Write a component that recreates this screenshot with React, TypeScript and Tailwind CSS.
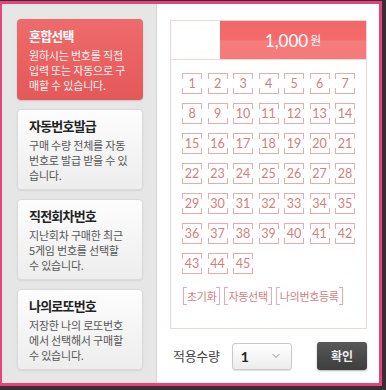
import React from 'react';
import { ChevronDown } from 'lucide-react';

const KR = { fontFamily: '"Noto Sans CJK KR", "Noto Sans", sans-serif' };
const NUM = { fontFamily: 'Lato, "Noto Sans CJK KR", sans-serif' };

const menus = [
  { title: '혼합선택', lines: ['원하시는 번호를 직접', '입력 또는 자동으로 구', '매할 수 있습니다.'], active: true },
  { title: '자동번호발급', lines: ['구매 수량 전체를 자동', '번호로 발급 받을 수 있', '습니다.'] },
  { title: '직전회차번호', lines: ['지난회차 구매한 최근', '5게임 번호를 선택할', '수 있습니다.'] },
  { title: '나의로또번호', lines: ['저장한 나의 로또번호', '에서 선택해서 구매할', '수 있습니다.'] },
];

const MenuCard = ({ title, lines, active }: { title: string; lines: string[]; active?: boolean }) => (
  <div
    className={
      active
        ? 'h-[81px] rounded-[4px] bg-gradient-to-b from-[#ef6b6b] to-[#e45858] px-[12px] pt-[9px] shadow-[0_1px_2px_rgba(0,0,0,0.15)]'
        : 'h-[81px] rounded-[4px] border border-[#dadada] bg-gradient-to-b from-[#fdfdfd] to-[#ededed] px-[11px] pt-[8px] shadow-[0_1px_2px_rgba(0,0,0,0.08)]'
    }
  >
    <div className={`text-[13px] leading-[16px] font-bold tracking-[-0.8px] ${active ? 'text-white' : 'text-[#222]'}`}>
      {title}
    </div>
    <div className={`mt-[4px] text-[11px] leading-[15px] tracking-[-0.2px] ${active ? 'text-[#fff2f2]' : 'text-[#555]'}`}>
      {lines.map((l) => (
        <div key={l} className="whitespace-nowrap">{l}</div>
      ))}
    </div>
  </div>
);

// number cell with bracket-style corners
const NumCell = ({ n }: { n: number }) => (
  <div className="relative h-[21px] w-[20px] flex items-center justify-center pt-[2px] text-[12.5px] text-[#d27e7e]" style={NUM}>
    <span className="absolute inset-x-0 top-0 h-[6px] border-x border-t border-[#e6acac]" />
    <span className="absolute inset-x-0 bottom-0 h-[6px] border-x border-b border-[#e6acac]" />
    {n}
  </div>
);

const BracketBtn = ({ label }: { label: string }) => (
  <div className="relative h-[18px] flex items-center px-[4px] text-[11px] text-[#d27e7e] tracking-[-0.3px]">
    <span className="absolute inset-y-0 left-0 w-[4px] border-y border-l border-[#e6acac]" />
    <span className="absolute inset-y-0 right-0 w-[4px] border-y border-r border-[#e6acac]" />
    {label}
  </div>
);

export default function App() {
  const nums = Array.from({ length: 45 }, (_, i) => i + 1);
  return (
    <div className="w-[386px] h-[390px] bg-[#3a2c33] pt-px pr-[4px] pb-[4px]" style={KR}>
      <div className="h-full flex border-[3px] border-l-2 border-[#e4437b] bg-white">
        {/* left menu */}
        <div className="w-[155px] shrink-0 bg-[#e6e6e6] border-r border-[#d4d4d4] pl-[15px] pt-[15px] flex flex-col gap-[9px]">
          {menus.map((m) => (
            <div key={m.title} className="w-[126px]">
              <MenuCard {...m} />
            </div>
          ))}
        </div>

        {/* right side */}
        <div className="flex-1 pt-[16px] pl-[13px] pr-[12px]">
          <div className="border border-[#f0d5d5]">
            <div className="h-[39px] flex border-b border-[#f0d5d5]">
              <div className="w-[49px]" />
              <div className="flex-1 flex items-center justify-center text-white bg-[linear-gradient(#f26767_0%,#f36b6b_50%,#f67d7d_52%,#f57a7a_100%)]">
                <span className="text-[17px] leading-none" style={NUM}>1,000</span>
                <span className="ml-[2px] text-[12px] leading-none">원</span>
              </div>
            </div>
            <div className="pt-[13px] pb-[23px] px-[11px]">
              <div className="grid grid-cols-[repeat(7,20px)] justify-between gap-y-[9px]">
                {nums.map((n) => (
                  <NumCell key={n} n={n} />
                ))}
              </div>
              <div className="mt-[13px] flex gap-[4px] pl-[1px]">
                <BracketBtn label="초기화" />
                <BracketBtn label="자동선택" />
                <BracketBtn label="나의번호등록" />
              </div>
            </div>
          </div>

          <div className="mt-[13px] h-[28px] flex items-center">
            <span className="pl-[3px] text-[13px] text-[#444] tracking-[-0.3px]">적용수량</span>
            <div className="ml-[12px] w-[60px] h-[27px] rounded-[3px] border border-[#c9c9c9] bg-gradient-to-b from-white to-[#ececec] shadow-[0_1px_1px_rgba(0,0,0,0.12)] flex items-center justify-between pl-[8px] pr-[9px]">
              <span className="text-[14px] font-bold text-[#222]" style={NUM}>1</span>
              <ChevronDown size={12} strokeWidth={2} className="text-[#888]" />
            </div>
            <div className="ml-auto w-[50px] h-[28px] rounded-[3px] bg-gradient-to-b from-[#585858] to-[#3e3e3e] shadow-[0_1px_2px_rgba(0,0,0,0.3)] flex items-center justify-center text-[12px] font-bold text-[#eee]">
              확인
            </div>
          </div>
        </div>
      </div>
    </div>
  );
}
